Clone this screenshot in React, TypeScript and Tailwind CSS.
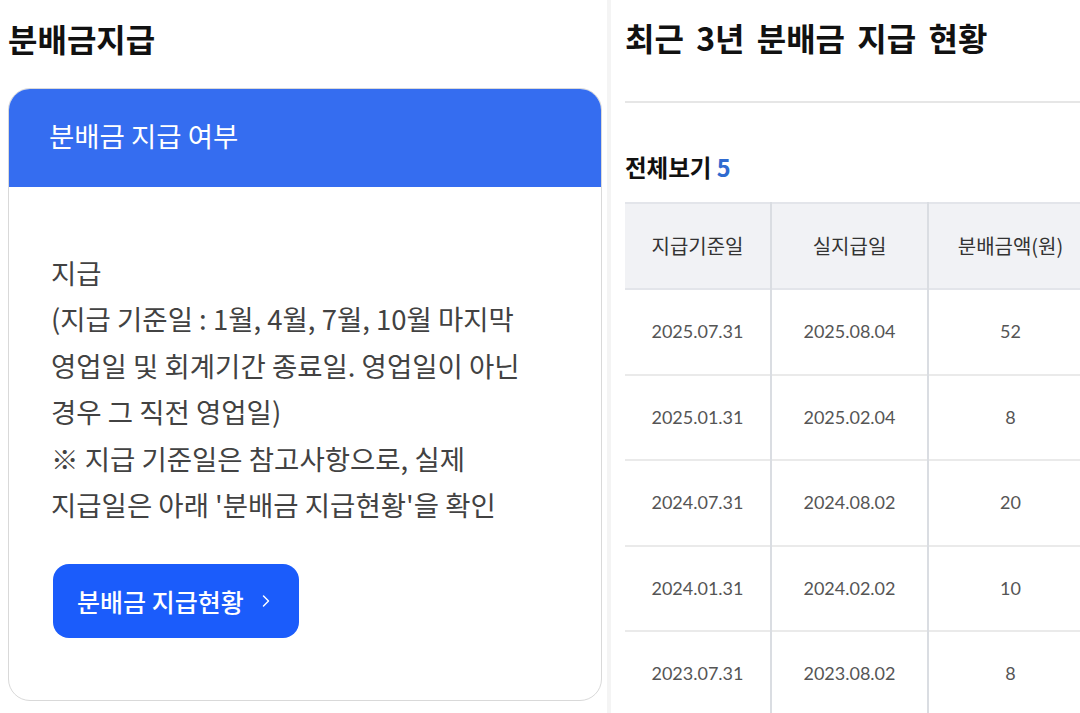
import { ChevronRight } from 'lucide-react';

const rows = [
  { base: '2025.07.31', paid: '2025.08.04', amount: '52' },
  { base: '2025.01.31', paid: '2025.02.04', amount: '8' },
  { base: '2024.07.31', paid: '2024.08.02', amount: '20' },
  { base: '2024.01.31', paid: '2024.02.02', amount: '10' },
  { base: '2023.07.31', paid: '2023.08.02', amount: '8' },
];

const kr = { fontFamily: '"Noto Sans CJK KR", "Noto Sans", sans-serif' };
const num = { fontFamily: 'Lato, "Noto Sans CJK KR", sans-serif' };

export default function App() {
  return (
    <div className="w-[1080px] h-[713px] overflow-hidden bg-white flex" style={kr}>
      {/* left: distribution info card */}
      <div className="w-[607px] shrink-0 pl-[8px]">
        <h1 className="pt-[18px] text-[32px] leading-[40px] font-bold text-[#111]">
          분배금지급
        </h1>
        <div className="mt-[30px] w-[594px] rounded-[22px] border-[1.5px] border-[#d9d9d9] overflow-hidden">
          <div className="h-[98px] bg-[#356df0] flex items-center pl-[40px]">
            <span className="text-[27.5px] text-white pb-[4px]">분배금 지급 여부</span>
          </div>
          <div className="pl-[42px] pt-[62px] pb-[62px]">
            <div className="text-[27.5px] leading-[46.4px] text-[#424242]">
              <div>지급</div>
              <div>(지급 기준일 : 1월, 4월, 7월, 10월 마지막</div>
              <div>영업일 및 회계기간 종료일. 영업일이 아닌</div>
              <div>경우 그 직전 영업일)</div>
              <div>※ 지급 기준일은 참고사항으로, 실제</div>
              <div>지급일은 아래 '분배금 지급현황'을 확인</div>
            </div>
            <button className="mt-[37px] ml-[2px] h-[74px] w-[246px] rounded-[16px] bg-[#1b5cfb] text-white flex items-center pl-[24px] gap-[12px]">
              <span className="text-[25px] font-medium">분배금 지급현황</span>
              <ChevronRight className="w-[20px] h-[20px]" strokeWidth={1.75} />
            </button>
          </div>
        </div>
      </div>

      {/* divider strip */}
      <div className="w-[4px] shrink-0 bg-[#f4f4f4]" />

      {/* right: last 3 years */}
      <div className="flex-1 pl-[14px] overflow-hidden">
        <div className="h-[103px] border-b-2 border-[#e6e6e6] pt-[17px]">
          <h2 className="text-[32px] leading-[40px] font-bold text-[#111] [word-spacing:5px]">
            최근 3년 분배금 지급 현황
          </h2>
        </div>
        <div className="mt-[49px] text-[23.5px] leading-[30px] font-bold text-[#111]">
          전체보기 <span className="text-[#2f6bd0]">5</span>
        </div>
        <table className="mt-[20px] w-[467px] border-collapse table-fixed">
          <colgroup>
            <col className="w-[146px]" />
            <col className="w-[157px]" />
            <col className="w-[164px]" />
          </colgroup>
          <thead>
            <tr className="h-[86px] bg-[#f1f2f5] border-t-2 border-b-2 border-[#e3e5ea]">
              <th className="font-normal text-[20px] text-[#333]">지급기준일</th>
              <th className="font-normal text-[20px] text-[#333] border-l-2 border-[#dadde2]">실지급일</th>
              <th className="font-normal text-[20px] text-[#333] border-l-2 border-[#dadde2]">분배금액(원)</th>
            </tr>
          </thead>
          <tbody>
            {rows.map((r) => (
              <tr key={r.base} className="h-[85.5px] border-b-2 border-[#eaeaea]">
                <td className="text-center text-[18px] text-[#555]" style={num}>{r.base}</td>
                <td className="text-center text-[18px] text-[#555] border-l-2 border-[#dadde2]" style={num}>{r.paid}</td>
                <td className="text-center text-[18px] text-[#555] border-l-2 border-[#dadde2]" style={num}>{r.amount}</td>
              </tr>
            ))}
          </tbody>
        </table>
      </div>
    </div>
  );
}
